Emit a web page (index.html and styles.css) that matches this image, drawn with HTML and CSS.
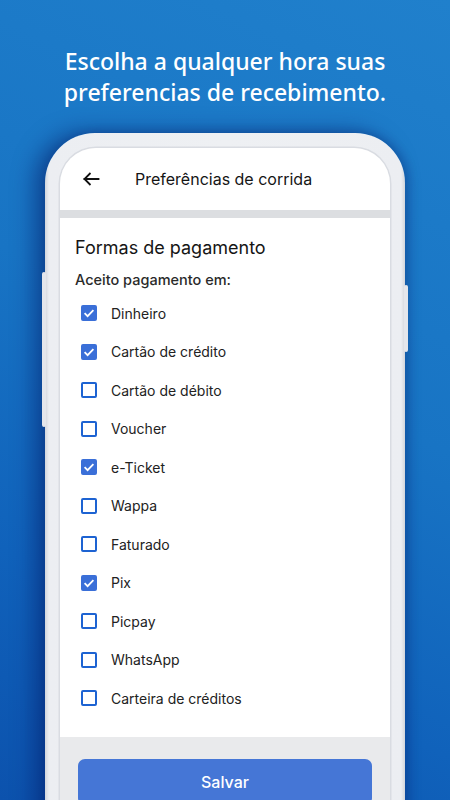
FILE: index.html
```html
<!DOCTYPE html>
<html lang="pt-BR">
<head>
<meta charset="utf-8">
<title>Preferências de corrida</title>
<link rel="stylesheet" href="styles.css">
</head>
<body>
<h1 class="headline">Escolha a qualquer hora suas<br>preferencias de recebimento.</h1>
<div class="phone">
  <span class="side-btn side-left"></span>
  <span class="side-btn side-right"></span>
  <div class="screen">
    <header class="appbar">
      <svg class="back" width="24" height="24" viewBox="0 0 24 24" fill="none" stroke="#111" stroke-width="1.8" stroke-linecap="square"><path d="M19.5 12H5.5"/><path d="M11.5 6l-6 6 6 6" stroke-linecap="butt"/></svg>
      <span class="appbar-title">Preferências de corrida</span>
    </header>
    <div class="divider"></div>
    <section class="content">
      <h2 class="section-title">Formas de pagamento</h2>
      <p class="subtitle">Aceito pagamento em:</p>
      <ul class="options">
        <li class="option"><span class="box checked"><svg viewBox="0 0 16 16" width="16" height="16"><path d="M3.6 8.2l3 3 5.8-6" fill="none" stroke="#fff" stroke-width="1.8"/></svg></span>Dinheiro</li>
        <li class="option"><span class="box checked"><svg viewBox="0 0 16 16" width="16" height="16"><path d="M3.6 8.2l3 3 5.8-6" fill="none" stroke="#fff" stroke-width="1.8"/></svg></span>Cartão de crédito</li>
        <li class="option"><span class="box"></span>Cartão de débito</li>
        <li class="option"><span class="box"></span>Voucher</li>
        <li class="option"><span class="box checked"><svg viewBox="0 0 16 16" width="16" height="16"><path d="M3.6 8.2l3 3 5.8-6" fill="none" stroke="#fff" stroke-width="1.8"/></svg></span>e-Ticket</li>
        <li class="option"><span class="box"></span>Wappa</li>
        <li class="option"><span class="box"></span>Faturado</li>
        <li class="option"><span class="box checked"><svg viewBox="0 0 16 16" width="16" height="16"><path d="M3.6 8.2l3 3 5.8-6" fill="none" stroke="#fff" stroke-width="1.8"/></svg></span>Pix</li>
        <li class="option"><span class="box"></span>Picpay</li>
        <li class="option"><span class="box"></span>WhatsApp</li>
        <li class="option"><span class="box"></span>Carteira de créditos</li>
      </ul>
    </section>
    <footer class="footer">
      <button class="save">Salvar</button>
    </footer>
  </div>
</div>
</body>
</html>
```

FILE: styles.css
```css
html, body {
  margin: 0;
  padding: 0;
}
body {
  width: 450px;
  height: 800px;
  overflow: hidden;
  background: linear-gradient(205deg, #2080cc 0%, #1874c4 45%, #1062bb 75%, #0c52ad 100%);
}
.headline {
  margin: 0;
  padding-top: 46px;
  font-family: "Noto Sans", "Open Sans", sans-serif;
  font-weight: 500;
  font-size: 23px;
  line-height: 31px;
  color: #fff;
  text-align: center;
}
.phone {
  position: relative;
  box-sizing: border-box;
  width: 360px;
  height: 720px;
  margin: 25px 0 0 45px;
  padding: 15px 15px 0;
  background: linear-gradient(90deg, #d3d6dc 0px, #eceef2 4px, #eef0f3 50%, #eceef2 calc(100% - 4px), #d3d6dc 100%);
  border-radius: 50px 50px 0 0;
  box-shadow: -10px 0 22px rgba(5, 25, 100, 0.55), 4px 0 10px rgba(5, 25, 100, 0.25);
}
.side-btn {
  position: absolute;
  width: 4px;
  background: #e4e6eb;
  border-radius: 2px;
}
.side-left {
  left: -3px;
  top: 139px;
  height: 155px;
}
.side-right {
  right: -3px;
  top: 152px;
  height: 67px;
}
.screen {
  height: 100%;
  display: flex;
  flex-direction: column;
  background: #e9eaec;
  border-radius: 36px 36px 0 0;
  overflow: hidden;
  box-shadow: 0 0 0 1.5px #d9dce2;
  font-family: "Inter", "Roboto", sans-serif;
  color: #1c1c1c;
}
.appbar {
  height: 62px;
  flex: none;
  display: flex;
  align-items: center;
  padding-left: 19px;
  background: #fff;
}
.back {
  display: block;
  flex: none;
}
.appbar-title {
  margin-left: 32px;
  font-size: 16px;
  font-weight: 400;
  color: #151515;
}
.divider {
  height: 8px;
  flex: none;
  background: #dcdee1;
}
.content {
  flex: none;
  background: #fff;
  padding: 18px 15px 19px;
}
.section-title {
  margin: 0;
  font-size: 18px;
  line-height: 24px;
  font-weight: 400;
  color: #151515;
}
.subtitle {
  margin: 9px 0 3px;
  font-size: 14.5px;
  line-height: 22px;
  font-weight: 500;
  color: #2a2a2a;
}
.options {
  list-style: none;
  margin: 0;
  padding: 0;
}
.option {
  height: 38.5px;
  display: flex;
  align-items: center;
  padding-left: 6px;
  font-size: 14px;
  color: #222;
}
.box {
  box-sizing: border-box;
  width: 16px;
  height: 16px;
  margin-right: 14px;
  border: 2px solid #1d63d2;
  border-radius: 2px;
  display: flex;
  align-items: center;
  justify-content: center;
}
.box.checked {
  background: #3a6fd8;
  border-color: #3a6fd8;
}
.box svg {
  display: block;
  flex: none;
  margin: -2px;
}
.footer {
  flex: 1;
  padding: 22px 18px 0;
}
.save {
  display: block;
  width: 100%;
  height: 46px;
  border: none;
  border-radius: 7px;
  background: #4576d6;
  color: #fff;
  font-family: "Inter", "Roboto", sans-serif;
  font-size: 16px;
  font-weight: 500;
}
```
